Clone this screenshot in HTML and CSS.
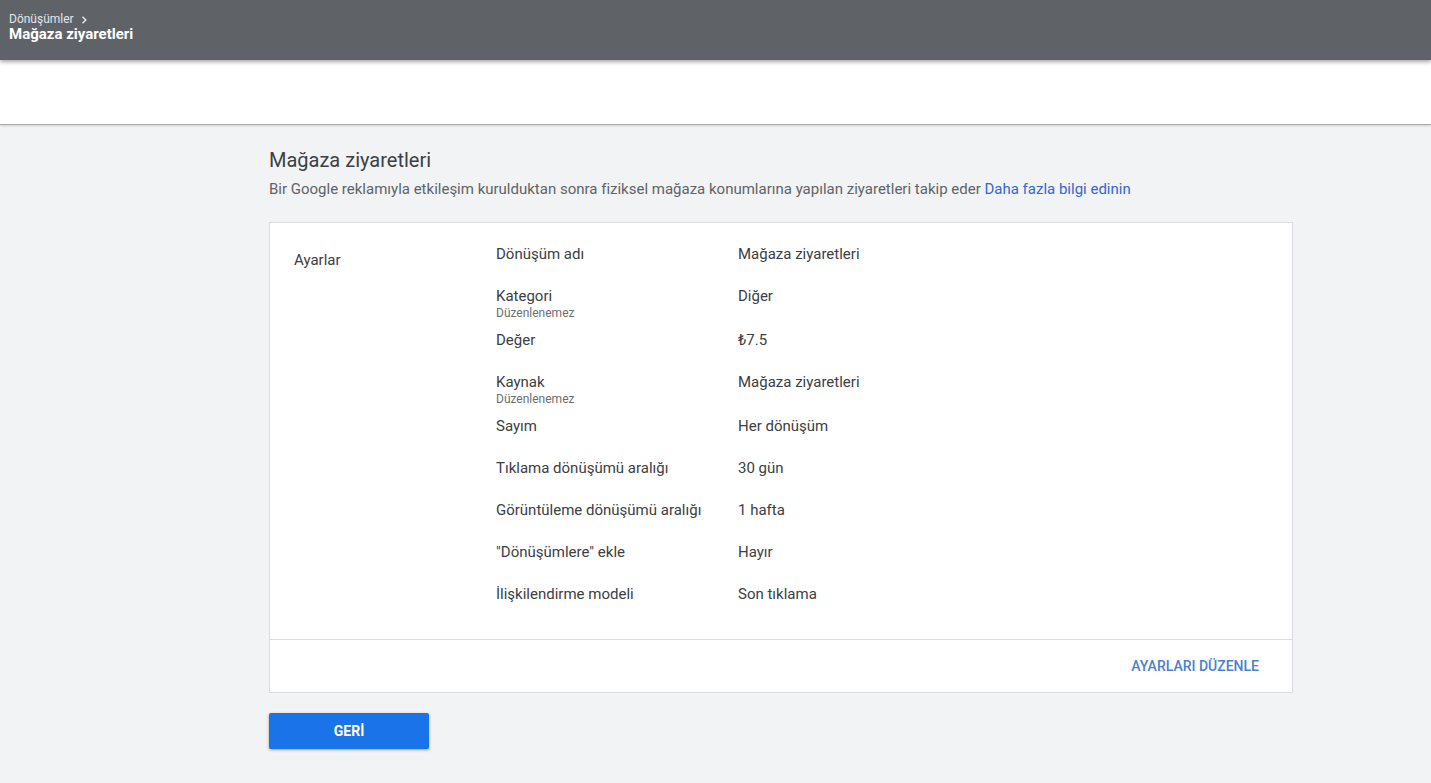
FILE: index.html
```html
<!DOCTYPE html>
<html lang="tr">
<head>
<meta charset="utf-8">
<title>Mağaza ziyaretleri</title>
<link rel="stylesheet" href="styles.css">
</head>
<body>
<header class="topbar">
  <div class="crumb">Dönüşümler <svg class="chev" width="10" height="10" viewBox="0 0 10 10"><path d="M3.5 1.8 L6.8 5 L3.5 8.2" fill="none" stroke="#e8eaed" stroke-width="1.4"/></svg></div>
  <div class="crumb-title">Mağaza ziyaretleri</div>
</header>
<div class="band"></div>
<main class="page">
  <h1 class="title">Mağaza ziyaretleri</h1>
  <p class="desc">Bir Google reklamıyla etkileşim kurulduktan sonra fiziksel mağaza konumlarına yapılan ziyaretleri takip eder <a class="link" href="#">Daha fazla bilgi edinin</a></p>
  <section class="card">
    <div class="card-body">
      <div class="section-label">Ayarlar</div>
      <div class="rows">
        <div class="row"><div class="name">Dönüşüm adı</div><div class="value">Mağaza ziyaretleri</div></div>
        <div class="row"><div class="name">Kategori<div class="sub">Düzenlenemez</div></div><div class="value">Diğer</div></div>
        <div class="row"><div class="name">Değer</div><div class="value">₺7.5</div></div>
        <div class="row"><div class="name">Kaynak<div class="sub">Düzenlenemez</div></div><div class="value">Mağaza ziyaretleri</div></div>
        <div class="row"><div class="name">Sayım</div><div class="value">Her dönüşüm</div></div>
        <div class="row"><div class="name">Tıklama dönüşümü aralığı</div><div class="value">30 gün</div></div>
        <div class="row"><div class="name">Görüntüleme dönüşümü aralığı</div><div class="value">1 hafta</div></div>
        <div class="row"><div class="name">"Dönüşümlere" ekle</div><div class="value">Hayır</div></div>
        <div class="row"><div class="name">İlişkilendirme modeli</div><div class="value">Son tıklama</div></div>
      </div>
    </div>
    <div class="card-footer">
      <button class="text-btn">AYARLARI DÜZENLE</button>
    </div>
  </section>
  <button class="primary-btn">GERİ</button>
</main>
</body>
</html>
```

FILE: styles.css
```css
html, body {
  margin: 0;
  padding: 0;
}
body {
  background: #f1f3f4;
  font-family: Roboto, "Noto Sans", Arial, sans-serif;
  color: #3c4043;
  min-height: 783px;
}
.topbar {
  background: #5f6368;
  height: 60px;
  box-sizing: border-box;
  padding: 12px 0 0 9px;
  box-shadow: 0 2px 4px rgba(0,0,0,0.35);
  position: relative;
  z-index: 2;
}
.crumb {
  font-size: 12px;
  line-height: 14px;
  color: #e3e5e8;
  display: flex;
  align-items: center;
  gap: 5px;
}
.chev {
  margin-top: 1px;
}
.crumb-title {
  font-size: 15px;
  line-height: 17px;
  font-weight: 700;
  color: #ffffff;
}
.band {
  background: #ffffff;
  height: 64px;
  border-bottom: 1px solid #a9abad;
  box-shadow: 0 1px 2px rgba(0,0,0,0.15);
}
.page {
  padding: 22px 0 40px 269px;
  width: 1024px;
}
.title {
  margin: 0;
  font-size: 20px;
  line-height: 26px;
  font-weight: 400;
  color: #3c4043;
}
.desc {
  margin: 6px 0 0;
  font-size: 15px;
  line-height: 20px;
  color: #5f6368;
}
.link {
  color: #3367d6;
  text-decoration: none;
}
.card {
  margin-top: 23px;
  background: #ffffff;
  border: 1px solid #dadce0;
}
.card-body {
  display: flex;
  padding: 21px 0 13px 24px;
}
.section-label {
  width: 202px;
  font-size: 15px;
  line-height: 20px;
  padding-top: 6px;
  color: #3c4043;
}
.rows {
  display: flex;
  flex-direction: column;
}
.row {
  display: flex;
  min-height: 42px;
  box-sizing: border-box;
  padding-bottom: 10px;
  font-size: 15px;
  line-height: 20px;
  color: #3c4043;
}
.name {
  width: 242px;
}
.sub {
  font-size: 12px;
  line-height: 14px;
  color: #6b6e72;
}
.value {
  color: #3c4043;
}
.card-footer {
  border-top: 1px solid #dadce0;
  height: 52px;
  display: flex;
  justify-content: flex-end;
  align-items: center;
  padding-right: 33px;
}
.text-btn {
  background: none;
  border: 0;
  padding: 0;
  font-family: inherit;
  font-size: 14px;
  font-weight: 500;
  color: #4a7fd4;
  cursor: pointer;
}
.primary-btn {
  margin-top: 20px;
  width: 160px;
  height: 36px;
  background: #1a73e8;
  color: #ffffff;
  border: 0;
  border-radius: 2px;
  font-family: inherit;
  font-size: 14px;
  font-weight: 700;
  box-shadow: 0 1px 3px rgba(0,0,0,0.35);
  cursor: pointer;
}
```
